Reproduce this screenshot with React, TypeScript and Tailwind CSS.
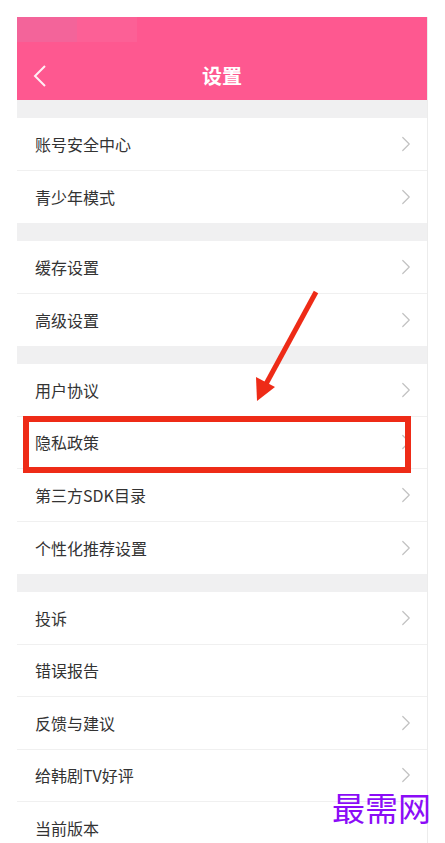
import { ChevronRight } from "lucide-react";

type Group = { label: string; arrow: boolean }[];

const groups: Group[] = [
    [
        { label: "账号安全中心", arrow: true },
        { label: "青少年模式", arrow: true },
    ],
    [
        { label: "缓存设置", arrow: true },
        { label: "高级设置", arrow: true },
    ],
    [
        { label: "用户协议", arrow: true },
        { label: "隐私政策", arrow: true },
        { label: "第三方SDK目录", arrow: true },
        { label: "个性化推荐设置", arrow: true },
    ],
    [
        { label: "投诉", arrow: true },
        { label: "错误报告", arrow: false },
        { label: "反馈与建议", arrow: true },
        { label: "给韩剧TV好评", arrow: true },
        { label: "当前版本", arrow: false },
    ],
];

const font = { fontFamily: '"Noto Sans CJK SC", "Noto Sans", sans-serif' };

const Row = ({ label, arrow, last }: { label: string; arrow: boolean; last: boolean }) => (
    <div className={`flex items-center justify-between h-[52.5px] pl-[18px] pr-[8px] bg-white ${last ? "" : "border-b border-[#f0f0f0]"}`}>
        <span className="text-[16px] text-[#333333] leading-none">{label}</span>
        {arrow && <ChevronRight size={26} strokeWidth={1.1} className="text-[#c2c2c2]" />}
    </div>
);

export default function App() {
    return (
        <div className="relative w-[445px] h-[843px] overflow-hidden bg-white pt-[17px] pl-[17px]" style={font}>
            <div className="w-[411px] bg-[#f0f0f1] border-r border-[#ececec]">
                {/* header */}
                <div className="h-[83px] bg-[#fe5890] flex flex-col">
                    <div className="h-[25px] flex">
                        <div className="w-[60px] bg-[#f3649a]" />
                        <div className="w-[60px] bg-[#fc6096]" />
                    </div>
                    <div className="relative flex-1 flex items-center justify-center">
                        <svg className="absolute left-[15px] top-[22px]" width="16" height="24" viewBox="0 0 16 24" fill="none">
                            <polyline points="13,2 3,12 13,22" stroke="white" strokeOpacity="0.9" strokeWidth="2" strokeLinejoin="miter" />
                        </svg>
                        <span className="text-[20px] font-bold text-white leading-none mt-[10px]">设置</span>
                    </div>
                </div>

                <div className="flex flex-col gap-[18px] pt-[18px]">
                    {groups.map((g, gi) => (
                        <div key={gi} className="flex flex-col">
                            {g.map((r, ri) => (
                                <Row key={r.label} label={r.label} arrow={r.arrow} last={ri === g.length - 1} />
                            ))}
                        </div>
                    ))}
                </div>
            </div>

            {/* red annotation box */}
            <div className="absolute left-[23px] top-[416px] w-[388px] h-[57px] border-[6px] border-[#ee2b17]" />

            {/* red arrow */}
            <svg className="absolute left-0 top-0" width="445" height="843" viewBox="0 0 445 843">
                <line x1="316" y1="292" x2="266" y2="384" stroke="#ee2b17" strokeWidth="5" strokeLinecap="butt" />
                <polygon points="257,401 256,377 275,387" fill="#ee2b17" />
            </svg>

            {/* watermark */}
            <span
                className="absolute left-[332px] top-[791px] text-[33px] leading-none text-[#8b0cf7]"
                style={{ fontFamily: '"Noto Sans CJK SC", serif' }}
            >
                最需网
            </span>
        </div>
    );
}
